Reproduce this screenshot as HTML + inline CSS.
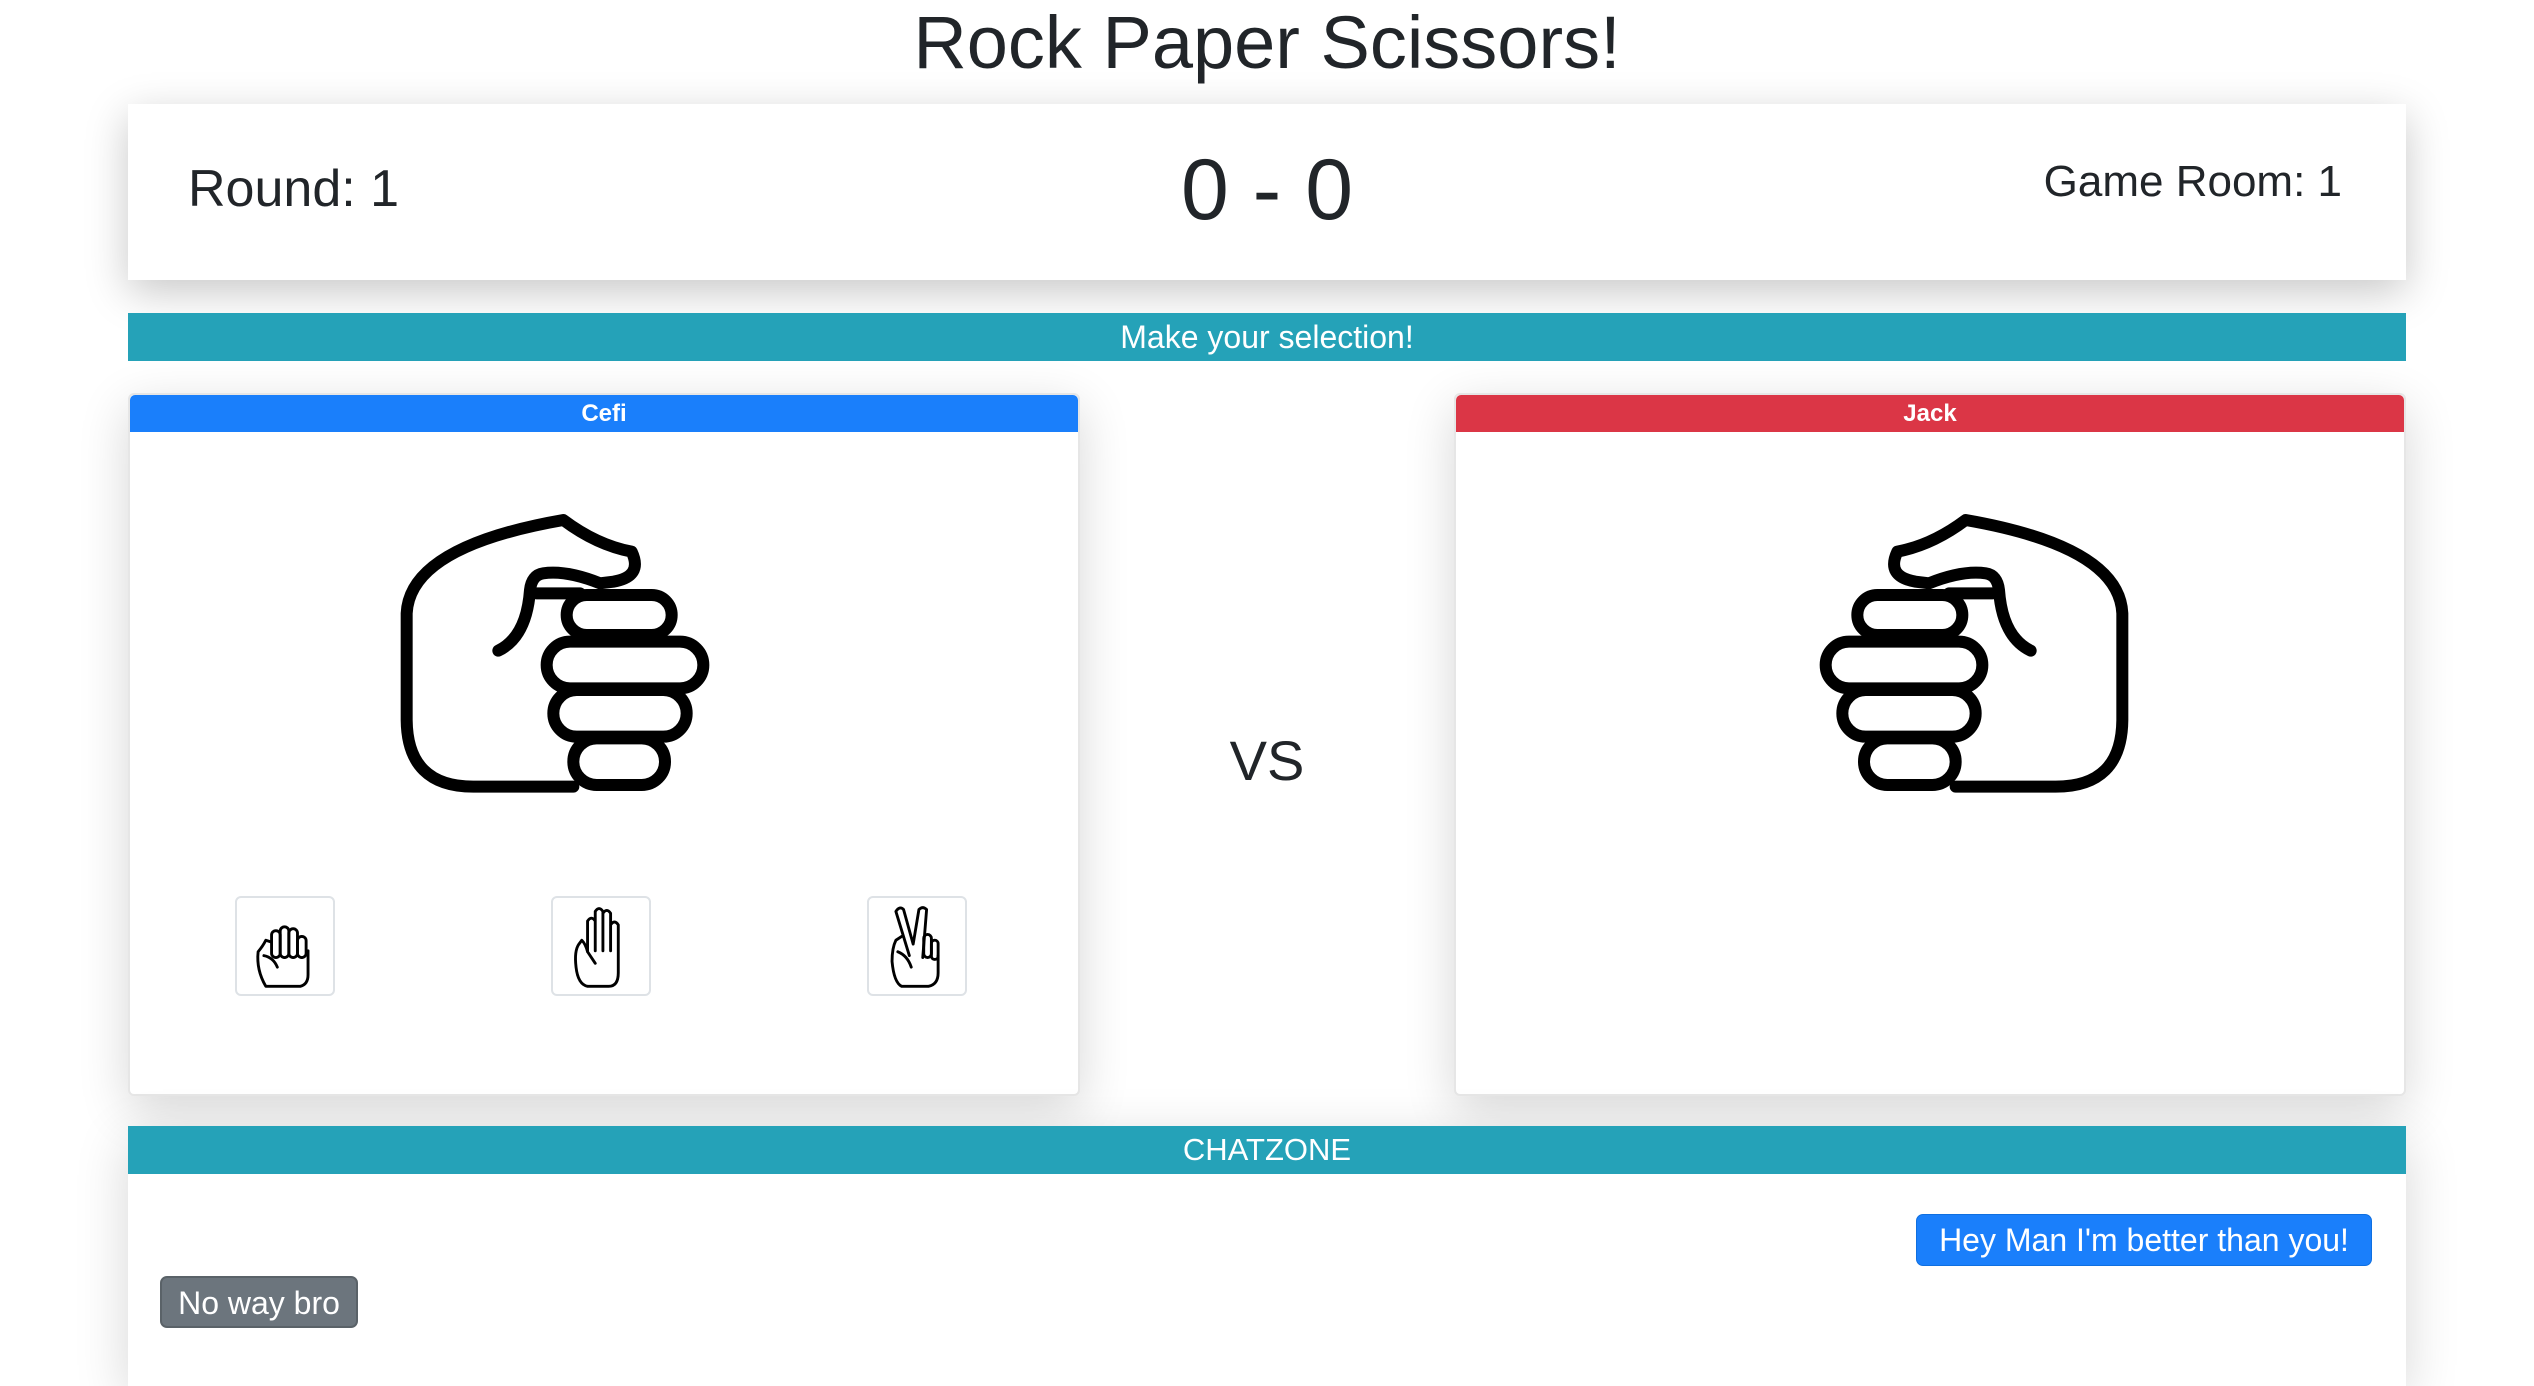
<!DOCTYPE html>
<html><head><meta charset="utf-8"><style>
*{box-sizing:border-box;margin:0;padding:0}
body{width:2534px;height:1340px;overflow:hidden;background:#fff;font-family:"Liberation Sans",Arial,sans-serif;color:#212529;position:relative}
.abs{position:absolute}
h1{position:absolute;left:0;width:2534px;top:0;text-align:center;font-size:74px;font-weight:400;line-height:86px}
.score{left:128px;top:104px;width:2278px;height:176px;background:#fff;box-shadow:0 12px 40px rgba(0,0,0,.22)}
.teal{background:#25a2b8;color:#fff;text-align:center}
.card{background:#fff;border:2px solid #e6e6e6;border-radius:6px;box-shadow:0 14px 50px rgba(0,0,0,.16)}
.hdr{position:absolute;left:0;top:0;right:0;height:37px;border-radius:5px 5px 0 0;color:#fff;font-weight:700;font-size:24px;text-align:center;line-height:37px}
.btn{position:absolute;width:100px;height:100px;border:2px solid #dee2e6;border-radius:6px;background:#fff}
.bub{position:absolute;color:#fff;font-size:32px;line-height:50px;text-align:center;border-radius:7px}
</style></head><body>
<h1>Rock Paper Scissors!</h1>
<div class="abs score">
 <div class="abs" style="left:60px;top:52px;font-size:52px;line-height:66px">Round: 1</div>
 <div class="abs" style="left:0;width:2278px;top:36px;text-align:center;font-size:86px;line-height:100px">0 - 0</div>
 <div class="abs" style="right:64px;top:50px;font-size:44px;line-height:56px">Game Room: 1</div>
</div>
<div class="abs teal" style="left:128px;top:313px;width:2278px;height:48px;font-size:32px;line-height:48px">Make your selection!</div>

<div class="abs card" style="left:128px;top:393px;width:952px;height:703px">
 <div class="hdr" style="background:#1a7ffb">Cefi</div>
</div>
<div class="abs card" style="left:1454px;top:393px;width:952px;height:703px">
 <div class="hdr" style="background:#db3646">Jack</div>
</div>

<svg class="abs" style="left:380px;top:480px" width="360" height="340" viewBox="0 0 1080 1020" fill="none" stroke="#000" stroke-width="36" stroke-linecap="round" stroke-linejoin="round">
 <path d="M580 920 L280 920 Q82 920 80 720 L80 400 Q90 200 550 120 Q650 195 755 215 Q790 290 700 305 L660 310 Q560 270 490 280 Q455 285 450 330 Q440 470 355 512"/>
 <path d="M470 340 L600 340"/>
 <rect x="560" y="345" width="315" height="120" rx="60"/>
 <rect x="500" y="485" width="470" height="140" rx="70"/>
 <rect x="520" y="630" width="400" height="140" rx="70"/>
 <rect x="580" y="775" width="275" height="140" rx="70"/>
</svg>
<svg class="abs" style="left:1789px;top:480px" width="360" height="340" viewBox="0 0 1080 1020" fill="none" stroke="#000" stroke-width="36" stroke-linecap="round" stroke-linejoin="round">
 <g transform="translate(1080 0) scale(-1 1)">
 <path d="M580 920 L280 920 Q82 920 80 720 L80 400 Q90 200 550 120 Q650 195 755 215 Q790 290 700 305 L660 310 Q560 270 490 280 Q455 285 450 330 Q440 470 355 512"/>
 <path d="M470 340 L600 340"/>
 <rect x="560" y="345" width="315" height="120" rx="60"/>
 <rect x="500" y="485" width="470" height="140" rx="70"/>
 <rect x="520" y="630" width="400" height="140" rx="70"/>
 <rect x="580" y="775" width="275" height="140" rx="70"/>
 </g>
</svg>

<div class="btn" style="left:235px;top:896px"><svg width="96" height="96" viewBox="0 0 100 100" fill="none" stroke="#000" stroke-width="3" stroke-linecap="round" stroke-linejoin="round">
 <rect x="36" y="34" width="9" height="28" rx="4.5"/><rect x="45" y="30" width="9" height="32" rx="4.5"/><rect x="54" y="32" width="9" height="30" rx="4.5"/><rect x="63" y="40" width="9" height="22" rx="4.5"/>
 <path d="M36 46 L30 44 Q27 50 22 56 Q20 75 30 92 L66 92 Q74 90 74 80 L74 55"/><path d="M28 60 Q38 62 42 72"/></svg></div>
<div class="btn" style="left:551px;top:896px"><svg width="96" height="96" viewBox="0 0 100 100" fill="none" stroke="#000" stroke-width="3" stroke-linecap="round" stroke-linejoin="round">
 <path d="M36 56 L36 24 Q40 18 44 24 L44 55 M44 24 L44 14 Q48 8 52 14 L52 55 M52 16 Q56 10 60 16 L60 55 M60 28 Q64 22 68 28 L68 78 Q68 92 58 92 L36 92 Q26 90 24 72 Q22 55 27 48 L30 44 Q34 48 36 56 Q40 62 44 68"/></svg></div>
<div class="btn" style="left:867px;top:896px"><svg width="96" height="96" viewBox="0 0 100 100" fill="none" stroke="#000" stroke-width="3" stroke-linecap="round" stroke-linejoin="round">
 <path d="M42 60 L28 14 Q32 8 36 12 L46 48 L52 12 Q56 8 60 12 L56 62"/><rect x="57" y="38" width="8" height="24" rx="4"/><rect x="65" y="44" width="7" height="20" rx="3.5"/>
 <path d="M34 40 L28 44 Q24 52 24 66 Q26 88 34 92 L62 92 Q72 90 72 78 L72 60 M30 56 Q40 60 44 72"/></svg></div>

<div class="abs" style="left:1167px;width:200px;top:726px;text-align:center;font-size:56px;line-height:70px">VS</div>

<div class="abs card" style="left:128px;top:1126px;width:2278px;height:260px;border:none;border-radius:0"></div>
<div class="abs teal" style="left:128px;top:1126px;width:2278px;height:48px;font-size:31px;line-height:48px">CHATZONE</div>
<div class="bub" style="left:1916px;top:1214px;width:456px;height:52px;background:#1a7ffb;border:1px solid #0f6fe0">Hey Man I'm better than you!</div>
<div class="bub" style="left:160px;top:1276px;width:198px;height:52px;background:#6c757d;border:2px solid #5a6268">No way bro</div>
</body></html>
